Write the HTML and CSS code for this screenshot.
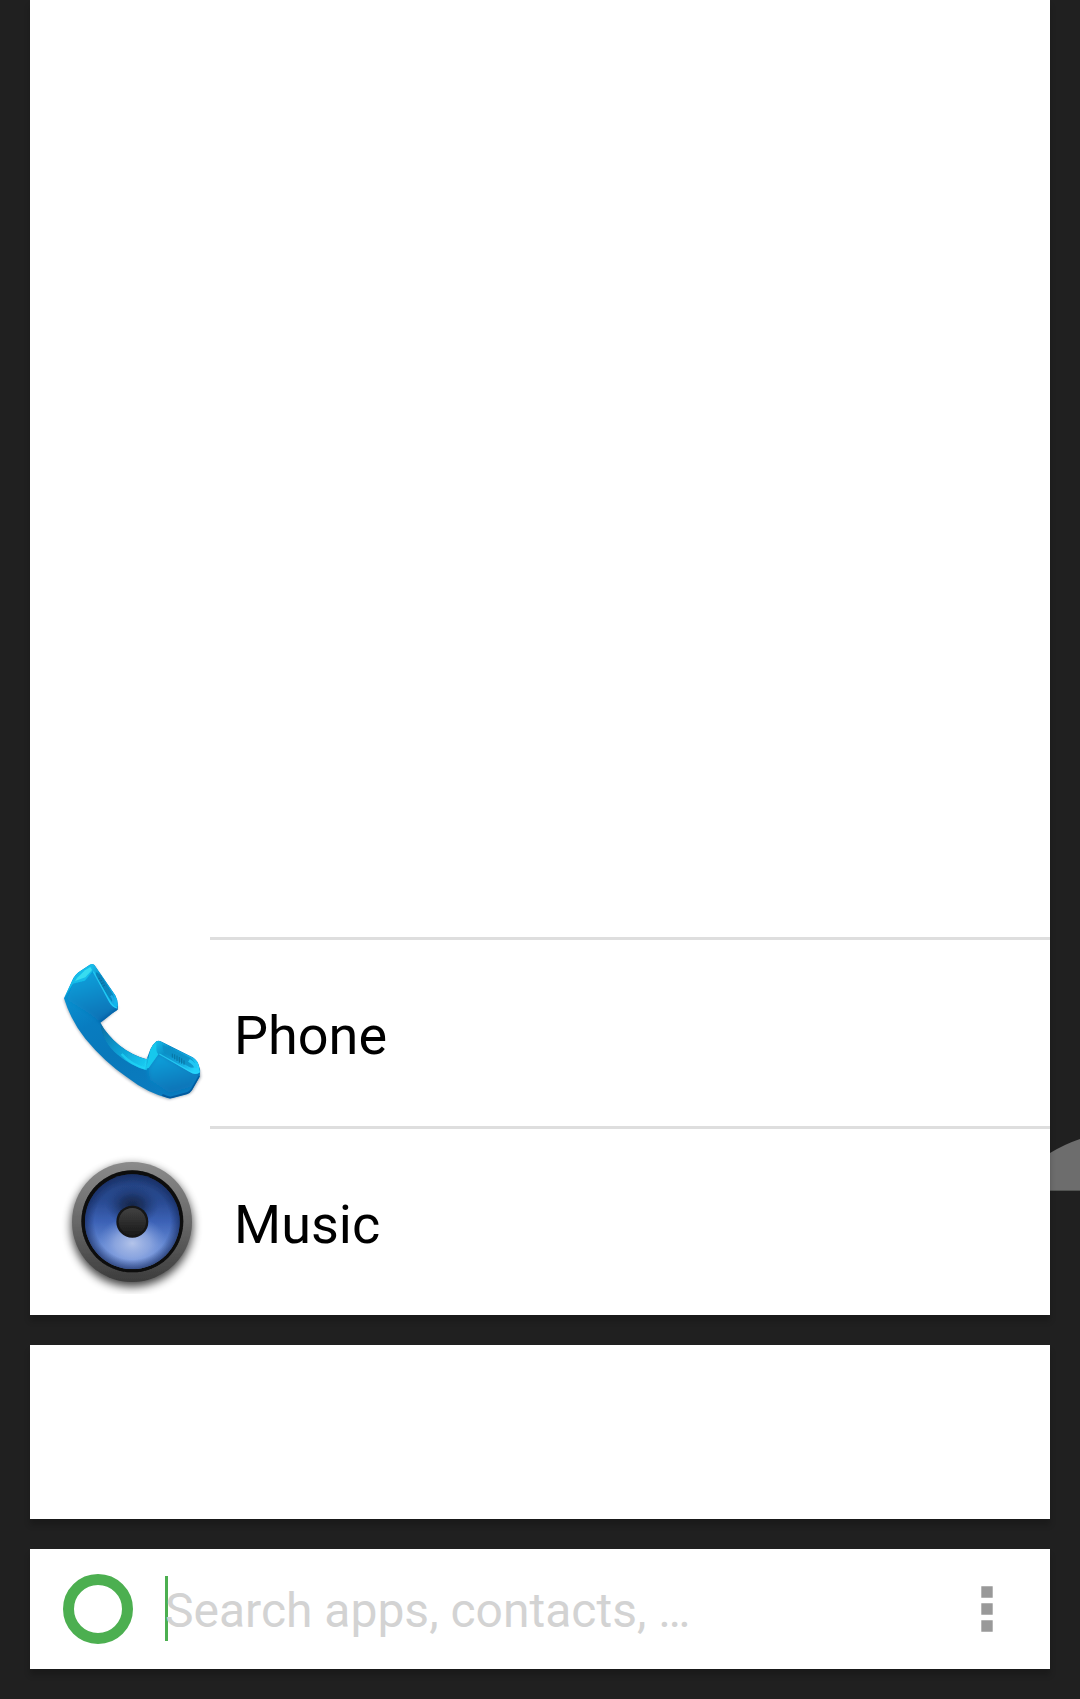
FILE: index.html
```html
<!DOCTYPE html>
<html lang="en">
<head>
<meta charset="utf-8">
<meta name="viewport" content="width=device-width, initial-scale=1">
<title>Launcher</title>
<link rel="stylesheet" href="styles.css">
</head>
<body>
<svg class="backdrop" viewBox="0 0 30 52" aria-hidden="true"><path d="M0 14Q15 5 30 0V52H0Z" fill="#6d6d6d"/><path d="M0 51.500H30" stroke="#515351"/></svg>
<main class="launcher">
  <section class="card results" aria-label="Apps">
    <ul class="app-list">
      <li><a class="app" href="#phone">
        <span class="app-icon">
          <svg viewBox="30 33 432 432" aria-hidden="true">
            <defs>
              <linearGradient id="body" gradientUnits="userSpaceOnUse" x1="120" y1="60" x2="300" y2="450"><stop offset="0" stop-color="#0a9ad8"/><stop offset=".35" stop-color="#087cc0"/><stop offset=".6" stop-color="#0878ba"/><stop offset="1" stop-color="#0a7cc0"/></linearGradient>
              <linearGradient id="ear" x1="0" y1="0" x2=".7" y2="1"><stop offset="0" stop-color="#1fc4ef"/><stop offset=".35" stop-color="#0a93cc"/><stop offset="1" stop-color="#12b5ec"/></linearGradient>
              <linearGradient id="mouth" x1="0" y1="0" x2="1" y2=".7"><stop offset="0" stop-color="#16bce9"/><stop offset=".3" stop-color="#0b91c9"/><stop offset=".65" stop-color="#14a4dc"/><stop offset="1" stop-color="#23d2fb"/></linearGradient>
              <linearGradient id="face" x1=".3" y1="0" x2=".6" y2="1"><stop offset="0" stop-color="#0ba2dc"/><stop offset=".5" stop-color="#0889c8"/><stop offset="1" stop-color="#0770b4"/></linearGradient>
              <linearGradient id="inner" gradientUnits="userSpaceOnUse" x1="150" y1="220" x2="290" y2="350"><stop offset="0" stop-color="#076a9f"/><stop offset=".45" stop-color="#0c99cf"/><stop offset="1" stop-color="#1bcdf3"/></linearGradient>
              <filter id="soft" x="-20%" y="-20%" width="140%" height="140%"><feGaussianBlur stdDeviation="4"/></filter>
              <filter id="fine" x="-30%" y="-30%" width="160%" height="160%"><feGaussianBlur stdDeviation="2"/></filter>
              <filter id="blend" x="-20%" y="-20%" width="140%" height="140%"><feGaussianBlur stdDeviation="7"/></filter>
              <clipPath id="handset"><path d="M42 145L70 84Q75 76 85 67L119 44Q128 39 134 46L196 136Q203 148 204 166L203 179L187 190L151 218Q170 253 208 286Q244 315 290 328L301 298Q305 286 319 274Q325 270 335 275L425 320Q439 327 445 341L451 361L449 380L426 421Q420 430 411 433L360 446Q294 431 231 382Q162 334 106 266Q62 211 42 145Z"/></clipPath>
            </defs>
            <path d="M42 149Q62 211 106 268Q163 338 229 384Q291 431 357 448L414 433Q422 430 428 422L452 381L449 360L330 280L288 330Q244 317 208 288Q170 255 151 221L204 175L132 47Z" fill="#001d36" opacity=".4" filter="url(#soft)"/>
            <g clip-path="url(#handset)">
              <path d="M30 30H460V460H30Z" fill="url(#body)"/>
              <path d="M128 65L178 155Q185 169 202 174L202 181L151 217L115 190L51 149L70 100L105 91Z" fill="url(#face)" filter="url(#blend)"/>
              <path d="M325 311L418 363Q437 374 449 369L426 410L360 430L300 390L294 354Z" fill="url(#face)" filter="url(#blend)"/>
              <path d="M42 145L70 84Q75 76 85 67L119 44L132 52L128 64L105 92L69 101Z" fill="#12bce9" filter="url(#fine)"/>
              <path d="M81 84L105 61L121 51L126 60L106 82L75 93Z" fill="#43e4f2" opacity=".8" filter="url(#fine)"/>
              <path d="M119 44Q128 39 134 46L196 136Q203 148 204 166L199 175Q185 170 178 157L131 69Q126 60 128 52Z" fill="url(#ear)"/>
              <path d="M138 67Q149 69 161 90L188 132Q197 150 188 159L177 143L139 80Z" fill="#077eb5" opacity=".8" filter="url(#fine)"/>
              <path d="M145 87L150 84M149 94L156 91M153 101L161 98M158 109L165 105" stroke="#086391" stroke-width="2"/>
              <path d="M183 137Q194 148 188 160" fill="none" stroke="#1ba9e3" stroke-width="7" filter="url(#fine)"/>
              <path d="M204 178L151 217" stroke="#06589f" stroke-width="12" opacity=".7" filter="url(#soft)"/>
              <path d="M151 218Q170 253 208 286Q244 315 290 328L286 359Q246 350 205 316Q156 276 151 218Z" fill="url(#inner)" filter="url(#fine)"/>
              <path d="M215 312Q243 344 287 356L291 323" fill="none" stroke="#20d6f7" stroke-width="7" opacity=".7" filter="url(#fine)"/>
              <path d="M288 356L301 298Q305 286 319 274L330 285L326 312L296 354Z" fill="#18c8ed" filter="url(#fine)"/>
              <path d="M319 274Q325 270 335 275L425 320Q439 327 445 341L450 365Q438 379 419 366L326 313Q319 309 319 297Z" fill="url(#mouth)"/>
              <path d="M338 284L417 322Q433 330 437 347Q430 357 417 350L350 313Q337 304 338 284Z" fill="#0b8fc5" opacity=".8" filter="url(#fine)"/>
              <path d="M367 311V323M374 313V328M381 317V333M388 321V338M395 325V341M402 331V344" stroke="#0873a2" stroke-width="3"/>
              <path d="M417 331Q438 344 438 355" fill="none" stroke="#22c7f4" stroke-width="10" filter="url(#fine)"/>
              <path d="M328 312L418 363Q437 374 449 366M130 65L178 153Q187 169 201 174" fill="none" stroke="#2bd8fc" stroke-width="4" opacity=".7" filter="url(#fine)"/>
              <path d="M449 378L426 418Q420 427 411 430L361 443Q351 441 337 435" fill="none" stroke="#064d91" stroke-width="6" opacity=".7" filter="url(#fine)"/>
            </g>
          </svg>
        </span>
        <span class="app-name">Phone</span>
      </a></li>
      <li><a class="app" href="#music">
        <span class="app-icon">
          <svg viewBox="30 30 432 432" aria-hidden="true">
            <defs>
              <linearGradient id="rim" x1="0" y1="0" x2="0" y2="1"><stop offset="0" stop-color="#8b8b8b"/><stop offset=".5" stop-color="#686868"/><stop offset="1" stop-color="#3c3c3c"/></linearGradient>
              <linearGradient id="cone" x1="0" y1="0" x2="0" y2="1"><stop offset="0" stop-color="#213f7b"/><stop offset=".28" stop-color="#294a91"/><stop offset=".5" stop-color="#3c62b6"/><stop offset=".75" stop-color="#6488d2"/><stop offset="1" stop-color="#7898df"/></linearGradient>
              <radialGradient id="shine"><stop offset="0" stop-color="#b4c4ea"/><stop offset=".5" stop-color="#9bb1e4" stop-opacity=".7"/><stop offset="1" stop-color="#7897dc" stop-opacity="0"/></radialGradient>
              <radialGradient id="shade"><stop offset="0" stop-color="#172647"/><stop offset=".4" stop-color="#192e5c" stop-opacity=".85"/><stop offset="1" stop-color="#203d7a" stop-opacity="0"/></radialGradient>
              <radialGradient id="edge"><stop offset=".8" stop-color="#14275a" stop-opacity="0"/><stop offset="1" stop-color="#14275a" stop-opacity=".65"/></radialGradient>
              <linearGradient id="cap" x1="0" y1="0" x2="0" y2="1"><stop offset="0" stop-color="#424242"/><stop offset="1" stop-color="#191919"/></linearGradient>
              <filter id="drop" x="-20%" y="-20%" width="140%" height="140%"><feGaussianBlur stdDeviation="14"/></filter>
              <filter id="smooth" x="-10%" y="-10%" width="120%" height="120%"><feGaussianBlur stdDeviation="2"/></filter>
            </defs>
            <circle cx="246" cy="258" r="182" opacity=".75" filter="url(#drop)"/>
            <circle cx="246" cy="246" r="180" fill="url(#rim)" filter="url(#smooth)"/>
            <circle cx="247" cy="244" r="153" fill="#090909" filter="url(#smooth)"/>
            <g filter="url(#smooth)">
              <circle cx="247" cy="245" r="142" fill="url(#cone)"/>
              <ellipse cx="247" cy="310" rx="105" ry="80" fill="url(#shine)"/>
              <ellipse cx="247" cy="196" rx="80" ry="60" fill="url(#shade)"/>
              <circle cx="247" cy="245" r="142" fill="url(#edge)"/>
              <circle cx="247" cy="245" r="48" fill="#141414"/>
              <circle cx="247" cy="245" r="41" fill="url(#cap)"/>
            </g>
          </svg>
        </span>
        <span class="app-name">Music</span>
      </a></li>
    </ul>
  </section>
  <section class="card favorites" aria-label="Favorites"></section>
  <form class="card search" role="search">
    <button class="icon-button" type="button" aria-label="Show all apps">
      <svg class="ring" viewBox="0 0 70 70" aria-hidden="true"><circle cx="35" cy="35" r="29.500" fill="none" stroke="#4caf50" stroke-width="11"/></svg>
    </button>
    <label class="field">
      <input class="query" type="text" placeholder="Search apps, contacts, …" aria-label="Search apps and contacts">
    </label>
    <button class="icon-button" type="button" aria-label="Menu">
      <svg class="dots" viewBox="0 0 12 46" aria-hidden="true"><path d="M.3.300h11.400v11.400H.3zM.3 17.300h11.400v11.400H.3zM.3 34.300h11.400v11.400H.3z" fill="#999"/></svg>
    </button>
  </form>
</main>
</body>
</html>
```
FILE: styles.css
```css
* {
  box-sizing: border-box;
}

body {
  margin: 0;
  background: #202020;
  color: #000;
  font-family: Roboto, "Noto Sans", sans-serif;
}

.launcher {
  position: relative;
  display: flex;
  flex-direction: column;
  gap: 30px;
  min-height: 100vh;
  padding: 0 30px 30px;
}

/* Wallpaper shape that shows behind the cards at the right edge */
.backdrop {
  position: absolute;
  top: 1139px;
  right: 0;
  width: 30px;
  height: 52px;
}

.card {
  background: #fff;
  box-shadow: 0 6px 6px rgba(0, 0, 0, 0.2);
}

.results {
  display: flex;
  flex: 1;
  flex-direction: column;
  justify-content: flex-end;
}

.app-list {
  margin: 0;
  padding: 0;
  list-style: none;
}

.app {
  display: grid;
  grid-template-columns: 180px 1fr;
  height: 189px;
  color: inherit;
  text-decoration: none;
}

.app-icon {
  display: flex;
  align-items: center;
  padding: 3px 0 0 30px;
}

.app-icon svg {
  width: 144px;
  height: 144px;
}

.app-name {
  display: flex;
  align-items: center;
  padding: 6px 24px 0;
  border-top: 3px solid #dedede;
  font-size: 54px;
  line-height: 64px;
}

.favorites {
  height: 174px;
}

.search {
  display: flex;
  align-items: center;
  height: 120px;
}

.icon-button {
  display: flex;
  flex: none;
  align-items: center;
  justify-content: center;
  width: 126px;
  height: 120px;
  padding: 0;
  border: 0;
  background: none;
}

.icon-button:first-child {
  width: 135px;
}

.ring {
  width: 70px;
  height: 70px;
}

.dots {
  width: 12px;
  height: 46px;
}

.field {
  position: relative;
  flex: 1;
  min-width: 0;
}

/* Text cursor at the start of the empty field */
.field::before {
  content: "";
  position: absolute;
  top: 0;
  left: 0;
  width: 3px;
  height: 65px;
  background: #4caf50;
}

.query {
  position: relative;
  display: block;
  width: 100%;
  height: 66px;
  padding: 2px 0 0;
  border: 0;
  outline: 0;
  background: none;
  color: #000;
  font: 48px/60px Roboto, "Noto Sans", sans-serif;
}

.query::placeholder {
  color: #d3d3d3;
  opacity: 1;
}
```
